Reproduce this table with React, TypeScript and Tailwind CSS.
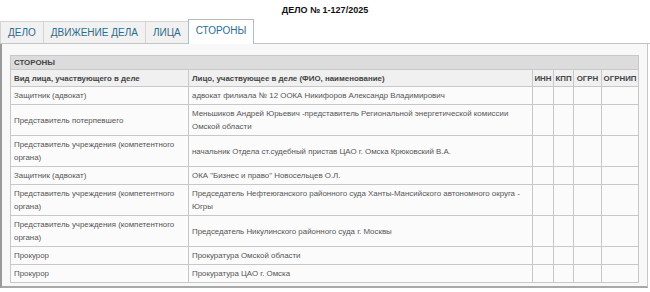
const rows: [string, string][] = [
  ['Защитник (адвокат)', 'адвокат филиала № 12 ООКА Никифоров Александр Владимирович'],
  ['Представитель потерпевшего', 'Меньшиков Андрей Юрьевич -представитель Региональной энергетической комиссии Омской области'],
  ['Представитель учреждения (компетентного органа)', 'начальник Отдела ст.судебный пристав ЦАО г. Омска Крюковский В.А.'],
  ['Защитник (адвокат)', 'ОКА "Бизнес и право" Новосельцев О.Л.'],
  ['Представитель учреждения (компетентного органа)', 'Председатель Нефтеюганского районного суда Ханты-Мансийского автономного округа - Югры'],
  ['Представитель учреждения (компетентного органа)', 'Председатель Никулинского районного суда г. Москвы'],
  ['Прокурор', 'Прокуратура Омской области'],
  ['Прокурор', 'Прокуратура ЦАО г. Омска'],
];

const tabs = ['ДЕЛО', 'ДВИЖЕНИЕ ДЕЛА', 'ЛИЦА'];

export default function App() {
  return (
    <div className="w-[650px] h-[292px] bg-white font-['Liberation_Sans',Arial,sans-serif] text-[#555]">
      {/* Title */}
      <div className="h-[20px] flex items-center justify-center pt-[1px] text-[9px] font-bold text-[#111]">
        ДЕЛО № 1-127/2025
      </div>

      {/* Tabs */}
      <div className="flex items-end h-[24px] border-b border-[#c4c4c4]">
        {tabs.map((t) => (
          <div
            key={t}
            className="h-[22px] flex items-center px-[7px] bg-[#f1f1f1] border-t border-l border-[#d4d4d4] text-[10px] text-[#2e6c8c]"
          >
            {t}
          </div>
        ))}
        <div className="h-[25px] -mb-px flex items-center px-[7px] pb-[3px] bg-white border border-b-0 border-[#a9bec7] text-[10px] text-[#2e6c8c]">
          СТОРОНЫ
        </div>
      </div>

      {/* Panel */}
      <div className="mr-[2px] h-[244px] bg-[#f8f8f8] border-l-2 border-r border-b-2 border-l-[#9a9a9a] border-r-[#c8c8c8] border-b-[#a8a8a8] pt-[11px] px-[8px]">
        <table className="w-[628px] table-fixed border-collapse text-[7.9px] leading-[13px] bg-[#fbfbfb]">
          <colgroup>
            <col className="w-[178px]" />
            <col className="w-[344px]" />
            <col className="w-[21px]" />
            <col className="w-[20px]" />
            <col className="w-[28px]" />
            <col className="w-[37px]" />
          </colgroup>
          <thead>
            <tr>
              <th colSpan={6} className="h-[14px] text-left font-bold text-[#444] bg-[#dcdcdc] border border-[#c8c8c8] px-[3px] py-0">
                СТОРОНЫ
              </th>
            </tr>
            <tr className="bg-[#f0f0f0] text-[#444]">
              <th className="h-[17px] text-left font-bold border border-[#c8c8c8] px-[3px] py-0">Вид лица, участвующего в деле</th>
              <th className="text-left font-bold border border-[#c8c8c8] px-[3px] py-0">Лицо, участвующее в деле (ФИО, наименование)</th>
              <th className="font-bold border border-[#c8c8c8] px-0 py-0 text-center">ИНН</th>
              <th className="font-bold border border-[#c8c8c8] px-0 py-0 text-center">КПП</th>
              <th className="font-bold border border-[#c8c8c8] px-0 py-0 text-center">ОГРН</th>
              <th className="font-bold border border-[#c8c8c8] px-0 py-0 text-center">ОГРНИП</th>
            </tr>
          </thead>
          <tbody>
            {rows.map(([kind, name], i) => (
              <tr key={i}>
                <td className="h-[18px] border border-[#c8c8c8] px-[3px] py-[2px] align-middle">{kind}</td>
                <td className="border border-[#c8c8c8] px-[3px] py-[2px] align-middle">{name}</td>
                <td className="border border-[#c8c8c8]" />
                <td className="border border-[#c8c8c8]" />
                <td className="border border-[#c8c8c8]" />
                <td className="border border-[#c8c8c8]" />
              </tr>
            ))}
          </tbody>
        </table>
      </div>
    </div>
  );
}
